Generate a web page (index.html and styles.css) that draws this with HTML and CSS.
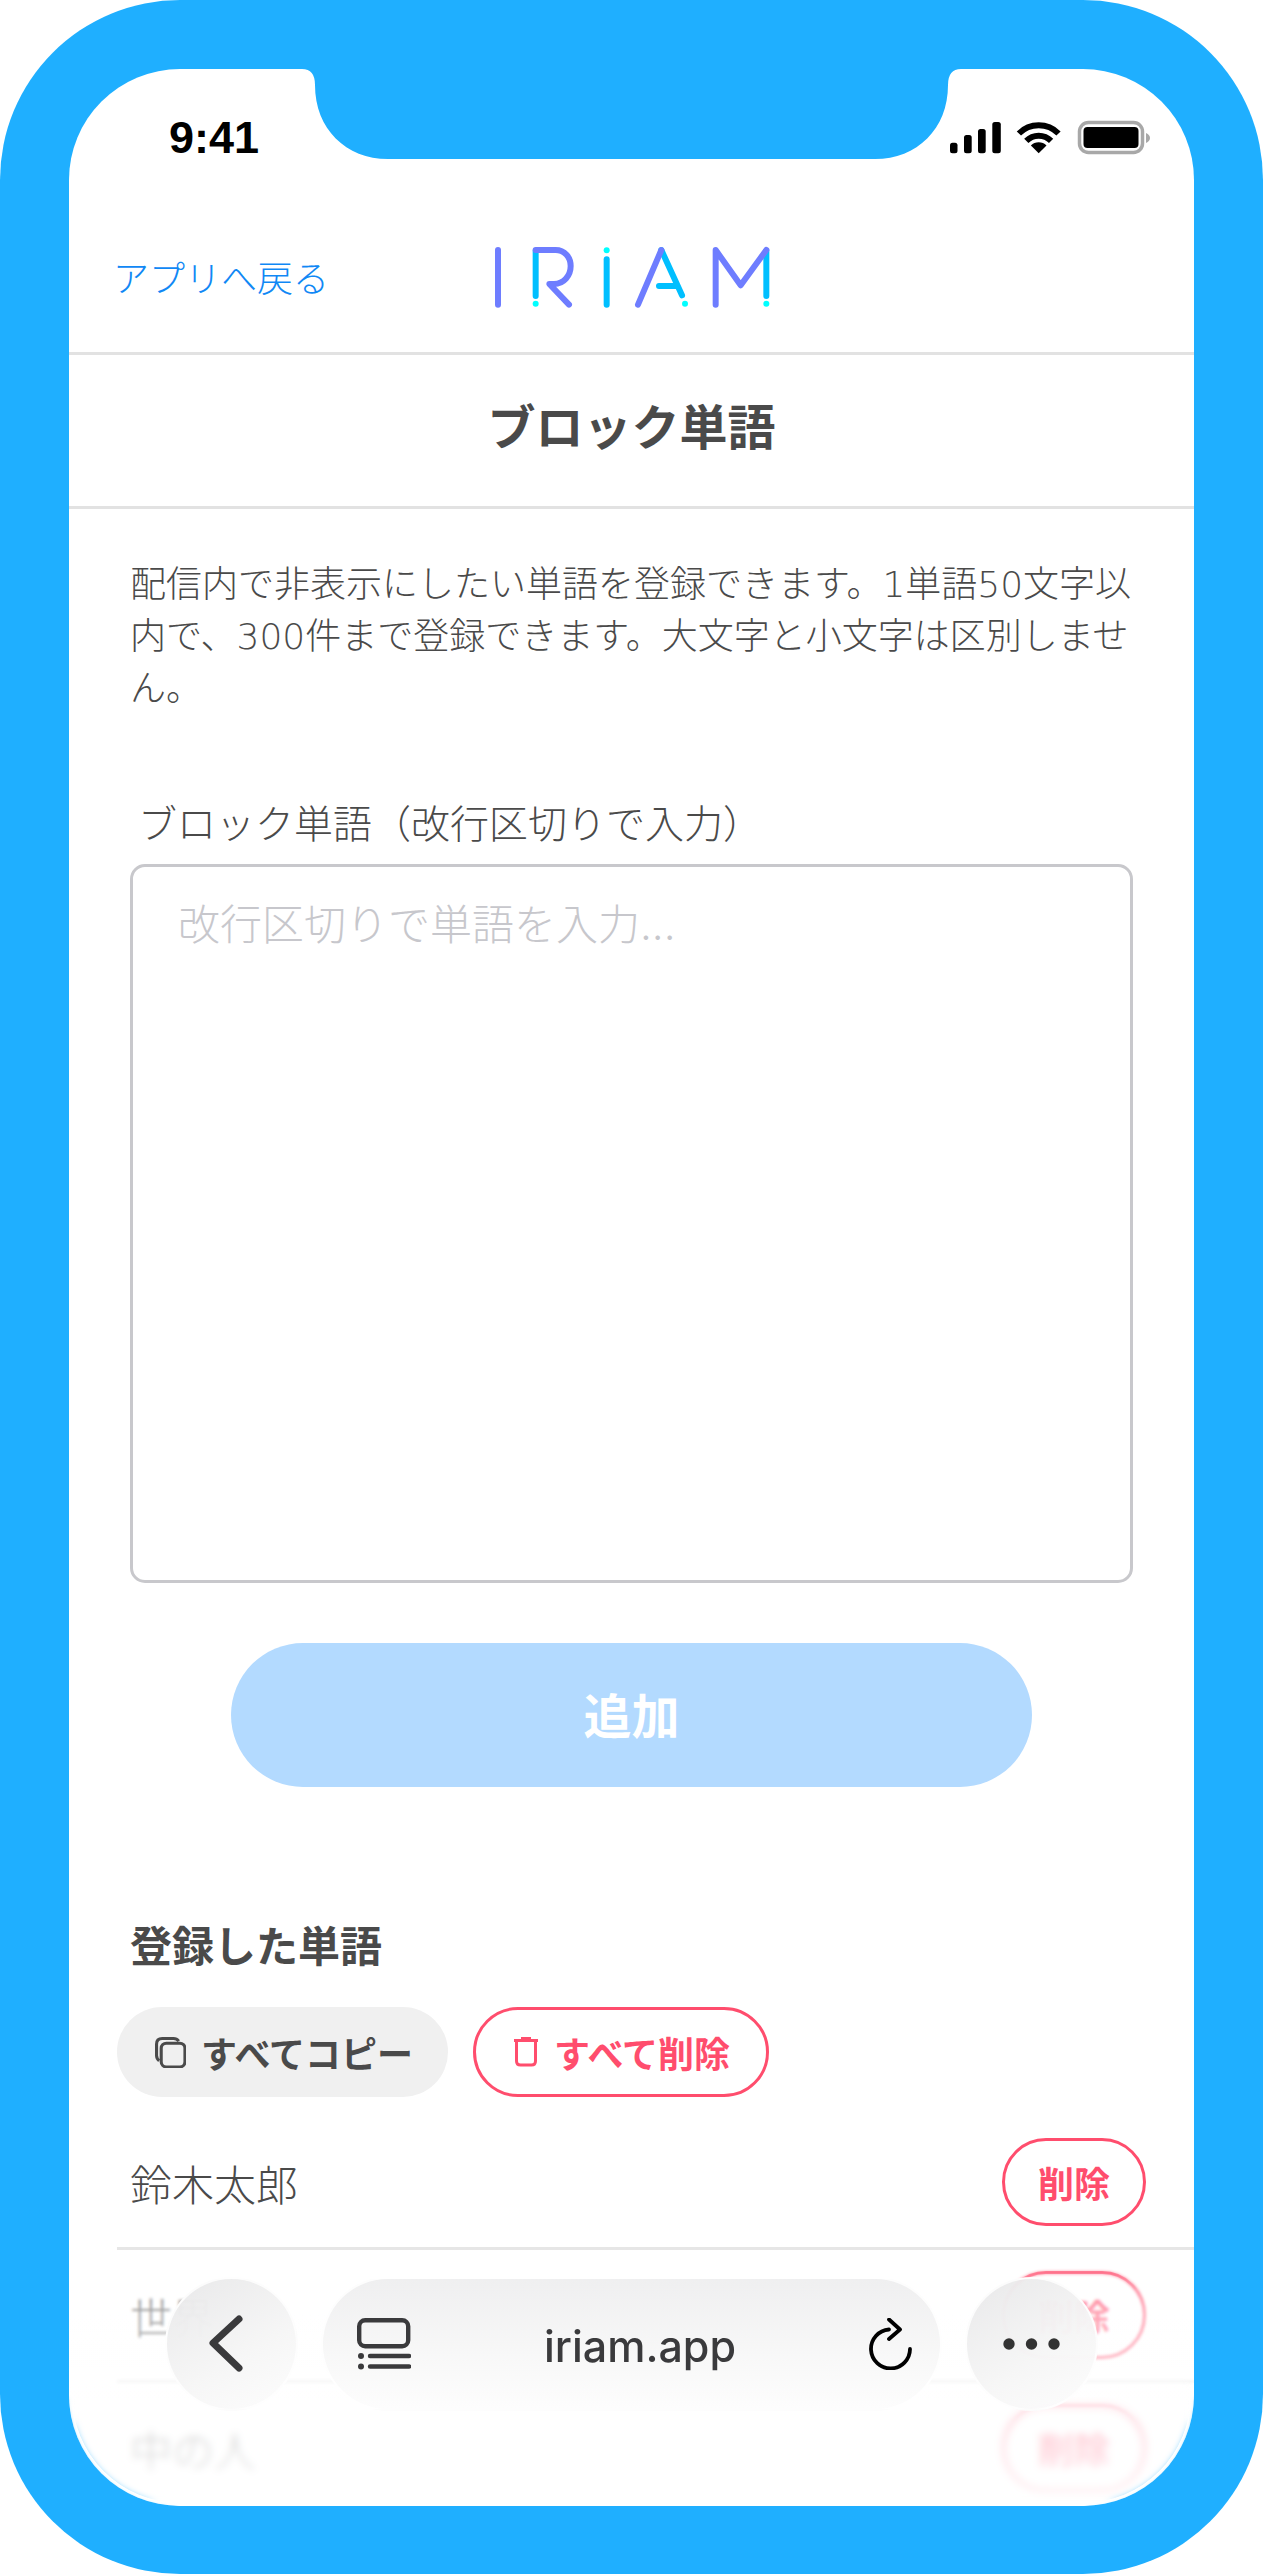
FILE: index.html
```html
<!DOCTYPE html>
<html lang="ja">
<head>
<meta charset="utf-8">
<title>ブロック単語</title>
<link rel="stylesheet" href="styles.css">
</head>
<body>
<div class="phone">
  <div class="screen">
    <svg class="notch" viewBox="0 0 659 90" aria-hidden="true"><path d="M0 0H659Q646 0 646 16C646 60 615 90 573 90H86C44 90 13 60 13 16Q13 0 0 0Z"/></svg>
    <div class="status">
      <span class="time">9:41</span>
      <svg class="status-icons" viewBox="0 0 200 36" aria-hidden="true">
        <rect x="0" y="22.7" width="7.5" height="10.6" rx="2.5"/>
        <rect x="14" y="15" width="7.7" height="18.3" rx="2.5"/>
        <rect x="28" y="9" width="7.7" height="24.3" rx="2.5"/>
        <rect x="42.3" y="2" width="8.5" height="31.3" rx="2.5"/>
        <path class="wifi" d="M68.9 13.5A28 28 0 0 1 108.5 13.5"/>
        <path class="wifi" d="M76.3 20.9A17.5 17.5 0 0 1 101.1 20.9"/>
        <path d="M80.9 25.5A11 11 0 0 1 96.5 25.5L88.7 33.3Z"/>
        <rect class="batt-frame" x="129.5" y="2.5" width="63" height="30" rx="9"/>
        <rect x="133.5" y="7" width="55" height="21" rx="4"/>
        <path class="batt-nub" d="M196 13Q200 15 200 18Q200 21 196 23Z"/>
      </svg>
    </div>
    <header class="app-header">
      <a class="back-link">アプリへ戻る</a>
      <svg class="logo" viewBox="154 75 840 195" role="img" aria-label="IRIAM">
        <g class="logo-cyan">
          <path d="M285 92V228"/>
          <path d="M498 118V254"/>
          <path d="M662 90L724 226M655 198H702"/>
          <path d="M977 92V228"/>
        </g>
        <g class="logo-dot">
          <circle cx="285" cy="251" r="9"/>
          <circle cx="498" cy="91" r="9"/>
          <circle cx="733" cy="251" r="9"/>
          <circle cx="977" cy="251" r="9"/>
        </g>
        <g class="logo-purple">
          <path d="M172 90V254"/>
          <path d="M285 90H345C372 90 390 112 390 138C390 166 370 192 340 192H326L385 254"/>
          <path d="M662 90L592 254"/>
          <path d="M825 254V90L900 196L977 90"/>
        </g>
      </svg>
      <span class="header-spacer"></span>
    </header>
    <h1 class="page-title">ブロック単語</h1>
    <main class="content">
      <p class="intro">配信内で非表示にしたい単語を登録できます。1単語50文字以内で、300件まで登録できます。大文字と小文字は区別しません。</p>
      <label class="field-label" for="words">ブロック単語（改行区切りで入力）</label>
      <textarea class="word-input" id="words" placeholder="改行区切りで単語を入力..."></textarea>
      <button class="add-btn" type="button">追加</button>
      <h2 class="list-title">登録した単語</h2>
      <div class="bulk-actions">
        <button class="pill pill-copy" type="button">
          <svg class="pill-icon-copy" viewBox="0 0 30 30" aria-hidden="true"><rect x="6" y="6" width="23" height="23" rx="5"/><path d="M4 23Q1.5 21 1.500 18V7Q1.500 1.500 7 1.500H18Q21 1.500 23 4"/></svg>
          すべてコピー
        </button>
        <button class="pill pill-delete" type="button">
          <svg class="pill-icon-trash" viewBox="0 0 24 30" aria-hidden="true"><path d="M0 3.500H24M7 1.200H17M2.500 4V24Q2.500 28 6.500 28H17.500Q21.500 28 21.500 24V4"/></svg>
          すべて削除
        </button>
      </div>
      <ul class="word-list">
        <li class="word-row"><span>鈴木太郎</span><button class="row-delete" type="button">削除</button></li>
        <li class="word-row"><span>世界</span><button class="row-delete" type="button">削除</button></li>
        <li class="word-row"><span>中の人</span><button class="row-delete" type="button">削除</button></li>
      </ul>
    </main>
    <div class="fade"></div>
    <div class="fade-deep"></div>
    <nav class="browser-bar">
      <button class="bar-circle" type="button" aria-label="戻る">
        <svg class="bar-icon-back" viewBox="0 0 40 60" aria-hidden="true"><path d="M33 5L7 29L33 54"/></svg>
      </button>
      <div class="bar-url">
        <svg class="bar-icon-tabs" viewBox="0 0 54 52" aria-hidden="true">
          <rect x="2.200" y="2.200" width="49" height="26" rx="6"/>
          <path d="M13 38H52M13 48.500H52"/>
          <circle class="dot" cx="4" cy="38" r="3"/>
          <circle class="dot" cx="4" cy="48.500" r="3"/>
        </svg>
        <span class="url-text">iriam.app</span>
        <svg class="bar-icon-reload" viewBox="0 0 44 52" aria-hidden="true"><path d="M20 11.500A19.500 19.500 0 1 0 41 31"/><path d="M20 1.500L31 11.500L20 21"/></svg>
      </div>
      <button class="bar-circle" type="button" aria-label="その他">
        <svg class="bar-icon-more" viewBox="0 0 57 12" aria-hidden="true"><circle cx="6" cy="6" r="5.700"/><circle cx="28.500" cy="6" r="5.700"/><circle cx="51" cy="6" r="5.700"/></svg>
      </button>
    </nav>
  </div>
</div>
</body>
</html>
```
FILE: styles.css
```css
* { box-sizing: border-box; }
html, body { margin: 0; padding: 0; background: #fff; }
body {
  font-family: Inter, "Noto Sans CJK JP", "Noto Sans", sans-serif;
  font-weight: 300;
  color: #4a4a4a;
  text-spacing-trim: space-all;
}
h1, h2, p, ul { margin: 0; padding: 0; }
ul { list-style: none; }
button { font-family: inherit; cursor: pointer; }

.phone {
  width: 1263px;
  height: 2574px;
  padding: 69px 69px 68px;
  background: #1fafff;
  border-radius: 180px;
}
.screen {
  position: relative;
  height: 2437px;
  background: #fff;
  border-radius: 111px;
  overflow: hidden;
}
.notch {
  position: absolute;
  top: 0;
  left: 233px;
  width: 659px;
  height: 90px;
  fill: #1fafff;
}

.status {
  display: flex;
  justify-content: space-between;
  height: 133px;
  padding: 47px 44px 0 100px;
}
.time {
  font: 700 45px/44px "Liberation Sans", sans-serif;
  color: #000;
}
.status-icons {
  width: 200px;
  height: 36px;
  margin-top: 4px;
  fill: #000;
}
.wifi { fill: none; stroke: #000; stroke-width: 6; }
.batt-frame { fill: none; stroke: #a8a8a8; stroke-width: 3.500; }
.batt-nub { fill: #a8a8a8; }

.app-header {
  display: grid;
  grid-template-columns: 1fr auto 1fr;
  align-items: center;
  height: 153px;
  border-bottom: 3px solid #e2e2e2;
}
.back-link {
  margin: 3px 0 0 44px;
  font-size: 36px;
  line-height: 52px;
  color: #1088f5;
}
.logo { width: 280px; height: 65px; fill: none; }
.logo path { stroke-width: 18; stroke-linecap: round; stroke-linejoin: round; fill: none; }
.logo-purple path { stroke: #6e7dff; }
.logo-cyan path { stroke: #00bfff; }
.logo-dot circle { fill: #00ffff; }

.page-title {
  height: 154px;
  font-size: 48px;
  font-weight: 700;
  line-height: 145px;
  text-align: center;
  border-bottom: 3px solid #e2e2e2;
}

.content { padding: 50px 61px 0; }
.intro {
  font-family: "DejaVu Sans", "Noto Sans CJK JP", sans-serif;
  font-size: 36px;
  line-height: 52px;
}
.field-label {
  display: block;
  margin-top: 82px;
  padding-left: 8px;
  font-size: 39px;
  line-height: 54px;
}
.word-input {
  display: block;
  width: 100%;
  height: 719px;
  margin-top: 13px;
  padding: 32px 45px;
  background: #fff;
  border: 3px solid #c8c8cc;
  border-radius: 15px;
  font-family: inherit;
  font-size: 42px;
  font-weight: 300;
  line-height: 52px;
  resize: none;
  outline: none;
}
.word-input::placeholder { color: #c7c7cc; opacity: 1; }
.add-btn {
  display: block;
  width: 801px;
  height: 144px;
  margin: 60px auto 0;
  padding: 0 0 5px;
  background: #b3daff;
  border: 0;
  border-radius: 72px;
  color: #fff;
  font-size: 48px;
  font-weight: 700;
}
.list-title {
  margin-top: 130px;
  font-size: 42px;
  font-weight: 700;
  line-height: 60px;
}
.bulk-actions {
  display: flex;
  gap: 25px;
  margin: 30px 0 0 -13px;
}
.pill {
  display: flex;
  align-items: center;
  height: 90px;
  border-radius: 45px;
  font-size: 36px;
  font-weight: 700;
  white-space: nowrap;
}
.pill-copy {
  gap: 15px;
  padding: 0 35px 0 38px;
  background: #f0f0f0;
  border: 0;
  color: #4a4a4a;
}
.pill-delete {
  gap: 16px;
  padding: 0 36px 0 38px;
  background: #fff;
  border: 3px solid #ff4d6d;
  color: #ff4d6d;
}
.pill-icon-copy {
  width: 31px;
  height: 31px;
  fill: none;
  stroke: #4a4a4a;
  stroke-width: 3;
}
.pill-icon-trash {
  width: 24px;
  height: 30px;
  fill: none;
  stroke: #ff4d6d;
  stroke-width: 3;
}
.word-list { margin: 20px -61px 0 -13px; }
.word-row {
  display: flex;
  justify-content: space-between;
  align-items: center;
  height: 133px;
  padding: 0 48px 0 13px;
  border-bottom: 3px solid #e6e6e6;
  font-size: 42px;
}
.row-delete {
  width: 144px;
  height: 88px;
  padding: 0;
  background: #fff;
  border: 3px solid #ff4d6d;
  border-radius: 44px;
  color: #ff4d6d;
  font-size: 36px;
  font-weight: 700;
}

.fade {
  position: absolute;
  left: 0;
  right: 0;
  bottom: 0;
  height: 256px;
  background: linear-gradient(to bottom, rgba(255,255,255,0), rgba(255,255,255,.5) 25%, rgba(255,255,255,.72) 70%, rgba(255,255,255,.9));
  border-radius: 0 0 111px 111px;
  -webkit-backdrop-filter: blur(1.500px);
  backdrop-filter: blur(1.500px);
  -webkit-mask-image: linear-gradient(to bottom, transparent, #000 40px);
  mask-image: linear-gradient(to bottom, transparent, #000 40px);
}
.fade-deep {
  position: absolute;
  left: 3px;
  right: 3px;
  bottom: 3px;
  height: 130px;
  border-radius: 0 0 108px 108px;
  -webkit-backdrop-filter: blur(3.500px);
  backdrop-filter: blur(3.500px);
  -webkit-mask-image: linear-gradient(to bottom, transparent, #000 50px);
  mask-image: linear-gradient(to bottom, transparent, #000 50px);
}
.browser-bar {
  position: absolute;
  left: 96px;
  right: 96px;
  bottom: 95px;
  display: flex;
  gap: 23px;
  height: 134px;
}
.bar-circle {
  display: flex;
  align-items: center;
  justify-content: center;
  flex: 0 0 133px;
  padding: 0;
  background: linear-gradient(150deg, rgba(234,234,235,.96) 10%, rgba(246,246,246,.96) 60%, rgba(253,253,253,.96));
  border: 2px solid rgba(255,255,255,.85);
  border-radius: 50%;
}
.bar-url {
  display: flex;
  flex: 1;
  align-items: center;
  justify-content: space-between;
  padding: 0 27px 0 34px;
  background: linear-gradient(to bottom, #efeff0, #f8f8f8 60%, #fdfdfd);
  border: 2px solid rgba(255,255,255,.85);
  border-radius: 67px;
}
.url-text {
  padding-top: 5px;
  font: 500 43px/1 Inter, sans-serif;
  color: #3a3a3c;
}
.bar-icon-back {
  width: 40px;
  height: 60px;
  margin-left: -12px;
  fill: none;
  stroke: #3a3a3c;
  stroke-width: 7;
  stroke-linecap: round;
  stroke-linejoin: round;
}
.bar-icon-tabs {
  width: 54px;
  height: 52px;
  fill: none;
  stroke: #3a3a3c;
  stroke-width: 4.400;
  stroke-linecap: round;
}
.bar-icon-tabs .dot { fill: #3a3a3c; stroke: none; }
.bar-icon-reload {
  width: 44px;
  height: 52px;
  fill: none;
  stroke: #000;
  stroke-width: 3.800;
  stroke-linecap: round;
  stroke-linejoin: round;
}
.bar-icon-more {
  width: 57px;
  height: 12px;
  fill: #333;
}
```
